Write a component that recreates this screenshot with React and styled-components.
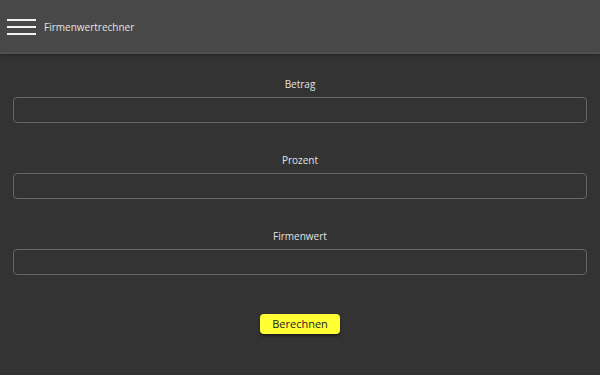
import React from "react";
import styled, { createGlobalStyle } from "styled-components";

const Global = createGlobalStyle`
  html, body { margin: 0; padding: 0; background: #333333; }
  body { font-family: "Open Sans", "Noto Sans", sans-serif; }
  * { box-sizing: border-box; }
`;

const Page = styled.div`
  width: 600px;
  height: 375px;
  background: #333333;
  display: flex;
  flex-direction: column;
`;

const Header = styled.header`
  height: 54px;
  background: #484848;
  border-bottom: 2px solid #505050;
  box-shadow: 0 1px 3px rgba(0, 0, 0, 0.35);
  display: flex;
  align-items: center;
  padding: 2px 0 0 7px;
  gap: 8px;
  flex-shrink: 0;
`;

const Burger = styled.div`
  width: 29px;
  display: flex;
  flex-direction: column;
  gap: 5px;
`;

const Line = styled.span`
  display: block;
  height: 2px;
  background: #f2f2f2;
`;

const Title = styled.span`
  color: #e4e4e4;
  font-size: 10px;
  line-height: 14px;
`;

const Main = styled.main`
  padding: 22px 13px 0;
  display: flex;
  flex-direction: column;
`;

const Field = styled.div`
  display: flex;
  flex-direction: column;
  align-items: stretch;
  margin-bottom: 29px;
`;

const Label = styled.label`
  text-align: center;
  color: #e2e2e2;
  font-size: 10px;
  line-height: 16px;
  margin-bottom: 5px;
`;

const Input = styled.input`
  height: 26px;
  background: #333333;
  border: 1px solid #666666;
  border-radius: 4px;
  color: #eee;
  font-family: inherit;
  font-size: 11px;
  padding: 0 8px;
  outline: none;
`;

const Actions = styled.div`
  display: flex;
  justify-content: center;
  margin-top: 10px;
`;

const Button = styled.button`
  width: 80px;
  height: 20px;
  background: #ffff33;
  border: none;
  border-radius: 4px;
  box-shadow: 0 2px 3px rgba(0, 0, 0, 0.5);
  color: #222;
  font-family: inherit;
  font-size: 11px;
  line-height: 20px;
  padding: 0;
  cursor: pointer;
`;

const fields = ["Betrag", "Prozent", "Firmenwert"];

export default function App() {
  return (
    <Page>
      <Global />
      <Header>
        <Burger>
          <Line />
          <Line />
          <Line />
        </Burger>
        <Title>Firmenwertrechner</Title>
      </Header>
      <Main>
        {fields.map((f) => (
          <Field key={f}>
            <Label>{f}</Label>
            <Input type="text" />
          </Field>
        ))}
        <Actions>
          <Button>Berechnen</Button>
        </Actions>
      </Main>
    </Page>
  );
}
